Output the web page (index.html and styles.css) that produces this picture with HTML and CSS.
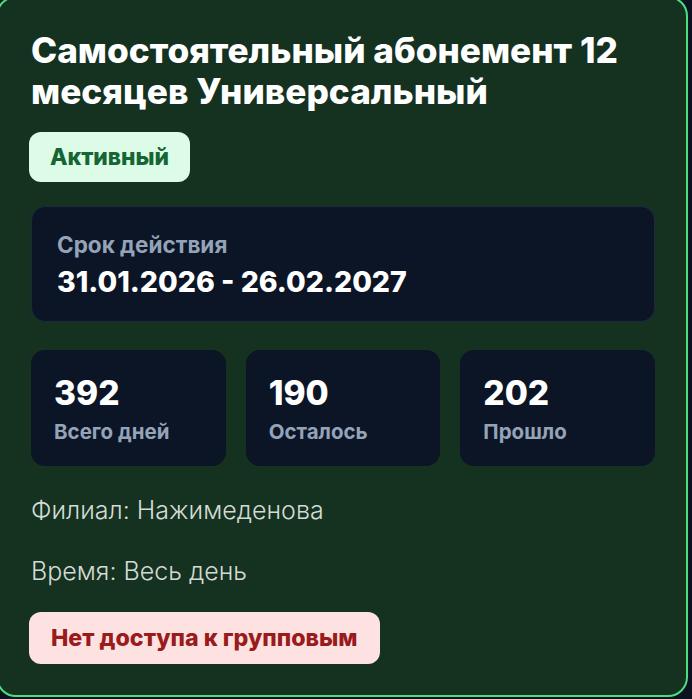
FILE: index.html
```html
<!DOCTYPE html>
<html lang="ru">
<head>
    <meta charset="UTF-8">
    <meta name="viewport" content="width=device-width, initial-scale=1.0">
    <title>Абонемент</title>
    <link rel="stylesheet" href="styles.css">
</head>
<body>

<div class="card">
    <h1 class="title">Самостоятельный абонемент 12 месяцев Универсальный</h1>

    <span class="badge badge-active">Активный</span>

    <div class="period">
        <div class="period-label">Срок действия</div>
        <div class="period-value">31.01.2026 - 26.02.2027</div>
    </div>

    <div class="stats">
        <div class="stat">
            <div class="stat-value">392</div>
            <div class="stat-label">Всего дней</div>
        </div>
        <div class="stat">
            <div class="stat-value">190</div>
            <div class="stat-label">Осталось</div>
        </div>
        <div class="stat">
            <div class="stat-value">202</div>
            <div class="stat-label">Прошло</div>
        </div>
    </div>

    <p class="info">Филиал: Нажимеденова</p>
    <p class="info">Время: Весь день</p>

    <span class="badge badge-denied">Нет доступа к групповым</span>
</div>

</body>
</html>
```

FILE: styles.css
```css
body {
    margin: 0;
    padding: 0;
    font-family: Inter, Roboto, sans-serif;
    background-color: #0b1220;
    overflow: hidden;
}
.card {
    margin: -4px 4px 0 -4px;
    height: 701px;
    box-sizing: border-box;
    padding: 32px 31px 0 33px;
    background-color: #14321f;
    border: 2px solid #4ade80;
    border-radius: 20px;
}
.title {
    margin: 0 0 20px 0;
    font-size: 35.2px;
    line-height: 41px;
    font-weight: 800;
    color: #ffffff;
}
.badge {
    display: block;
    width: fit-content;
    margin-left: -2px;
    padding: 11px 21px;
    border-radius: 12px;
    font-size: 22.8px;
    font-weight: 800;
    line-height: 28px;
}
.badge-active {
    background-color: #dcfce7;
    color: #166534;
}
.badge-denied {
    background-color: #fee2e2;
    color: #991b1b;
    margin-top: 26px;
    padding: 12px 22px;
    font-size: 23.2px;
}
.period {
    margin-top: 24px;
    padding: 24px 25px 22px 25px;
    background-color: #0b1526;
    border: 1px solid #1e293b;
    border-radius: 14px;
}
.period-label {
    font-size: 22.5px;
    line-height: 28px;
    font-weight: 700;
    color: #94a3b8;
    margin-bottom: 6px;
}
.period-value {
    font-size: 28.5px;
    line-height: 34px;
    font-weight: 800;
    color: #ffffff;
}
.stats {
    display: grid;
    grid-template-columns: repeat(3, 1fr);
    gap: 20px;
    margin-top: 28px;
}
.stat {
    padding: 24px 23px 21px 23px;
    background-color: #0b1526;
    border-radius: 14px;
}
.stat-value {
    font-size: 33.5px;
    line-height: 38px;
    font-weight: 800;
    color: #ffffff;
    margin-bottom: 7px;
}
.stat-label {
    font-size: 20.5px;
    line-height: 26px;
    font-weight: 700;
    color: #94a3b8;
}
.info {
    margin: 29px 0 0 0;
    font-size: 25px;
    line-height: 30px;
    font-weight: 300;
    color: #d4dbd6;
}
.info + .info {
    margin-top: 31px;
}
```
